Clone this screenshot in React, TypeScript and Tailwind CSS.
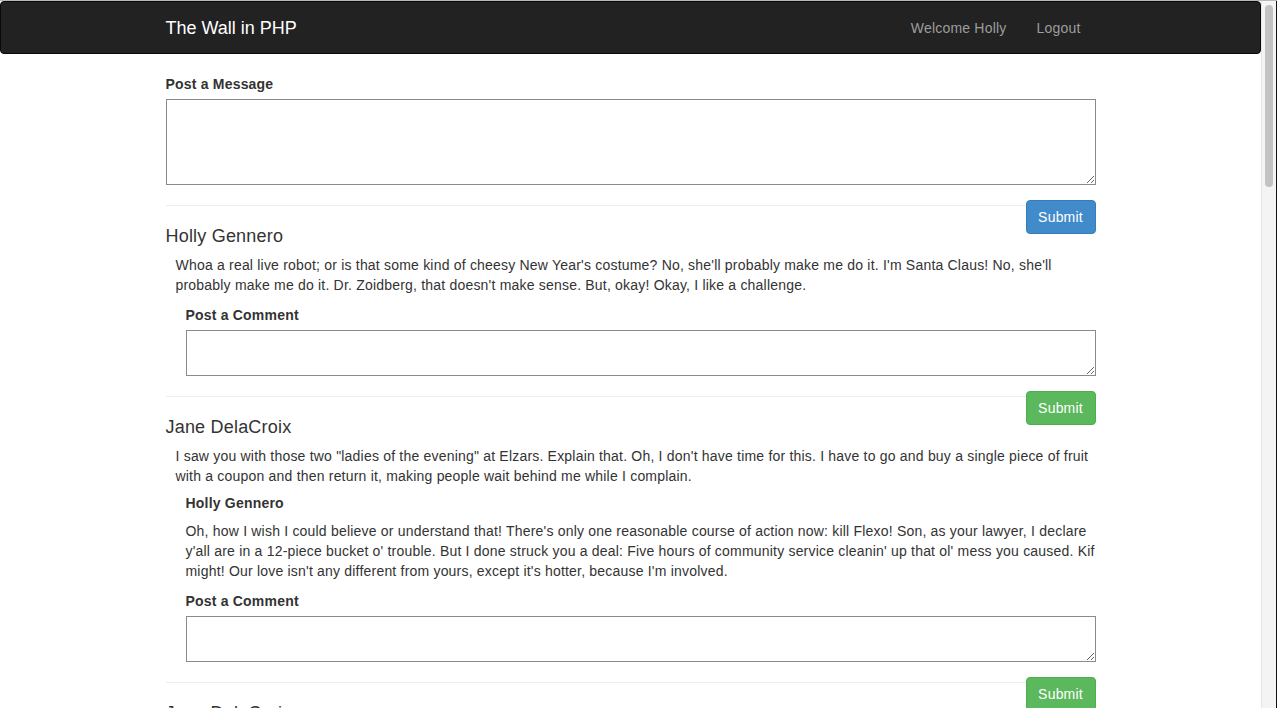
import React from "react";

type Comment = { author: string; text: string };
type Post = { author: string; text: string; comments: Comment[] };

const posts: Post[] = [
  {
    author: "Holly Gennero",
    text: "Whoa a real live robot; or is that some kind of cheesy New Year's costume? No, she'll probably make me do it. I'm Santa Claus! No, she'll probably make me do it. Dr. Zoidberg, that doesn't make sense. But, okay! Okay, I like a challenge.",
    comments: [],
  },
  {
    author: "Jane DelaCroix",
    text: 'I saw you with those two "ladies of the evening" at Elzars. Explain that. Oh, I don\'t have time for this. I have to go and buy a single piece of fruit with a coupon and then return it, making people wait behind me while I complain.',
    comments: [
      {
        author: "Holly Gennero",
        text: "Oh, how I wish I could believe or understand that! There's only one reasonable course of action now: kill Flexo! Son, as your lawyer, I declare y'all are in a 12-piece bucket o' trouble. But I done struck you a deal: Five hours of community service cleanin' up that ol' mess you caused. Kif might! Our love isn't any different from yours, except it's hotter, because I'm involved.",
      },
    ],
  },
  {
    author: "Jane DelaCroix",
    text: "Good news, everyone! There's a report on TV with some very bad news!",
    comments: [],
  },
];

function SubmitButton({ color }: { color: "blue" | "green" }) {
  return (
    <button
      className={
        color === "blue"
          ? "float-right mt-[15px] h-[34px] w-[70px] rounded-[4px] border border-[#357ebd] bg-[#428bca] text-[14px] leading-5 text-white"
          : "float-right mt-[15px] h-[34px] w-[70px] rounded-[4px] border border-[#4cae4c] bg-[#5cb85c] text-[14px] leading-5 text-white"
      }
    >
      Submit
    </button>
  );
}

export default function App() {
  return (
    <div className="flex h-[708px] w-[1277px] overflow-hidden border-t border-[#b8b8b8] bg-white font-['Liberation_Sans',Arial,sans-serif] text-[14px] leading-5 text-[#333]">
      <div className="h-full min-w-0 flex-1 overflow-hidden">
        <nav className="h-[53px] rounded-[4px] border border-[#080808] bg-[#222]">
          <div className="mx-auto flex h-full w-[960px] items-center justify-between px-[15px]">
            <span className="text-[18px] leading-5 text-white">The Wall in PHP</span>
            <div className="flex tracking-[0.2px]">
              <span className="px-[15px] text-[#9d9d9d]">Welcome Holly</span>
              <span className="px-[15px] text-[#9d9d9d]">Logout</span>
            </div>
          </div>
        </nav>

        <div className="mx-auto w-[930px] pt-[20px] tracking-[0.2px]">
          <div className="h-5 font-bold">Post a Message</div>
          <textarea className="mt-[5px] block h-[86px] w-full border border-[#8a8a8a] bg-white" />
          <SubmitButton color="blue" />

          {posts.map((p, i) => (
            <div key={i}>
              <hr className="mt-[20px] border-t border-[#eee]" />
              <h4 className="mt-[20px] h-5 text-[18px] leading-5">{p.author}</h4>
              <p className="mt-[9px] ml-[10px]">{p.text}</p>
              <div className="ml-[20px]">
                {p.comments.map((c, j) => (
                  <div key={j}>
                    <h5 className="mt-[10px] h-[15px] text-[14px] font-bold leading-[15px]">{c.author}</h5>
                    <p className="mt-[10px]">{c.text}</p>
                  </div>
                ))}
                <div className="mt-[10px] h-5 font-bold">Post a Comment</div>
                <textarea className="mt-[5px] block h-[46px] w-full border border-[#8a8a8a] bg-white" />
                <SubmitButton color="green" />
              </div>
            </div>
          ))}
        </div>
      </div>

      <div className="h-full w-[16px] shrink-0 border-l border-r border-l-[#e6e6e6] border-r-[#111] bg-[#f4f4f4]">
        <div className="mx-auto mt-[4px] h-[182px] w-[8px] rounded-full bg-[#c2c2c2]" />
      </div>
    </div>
  );
}
